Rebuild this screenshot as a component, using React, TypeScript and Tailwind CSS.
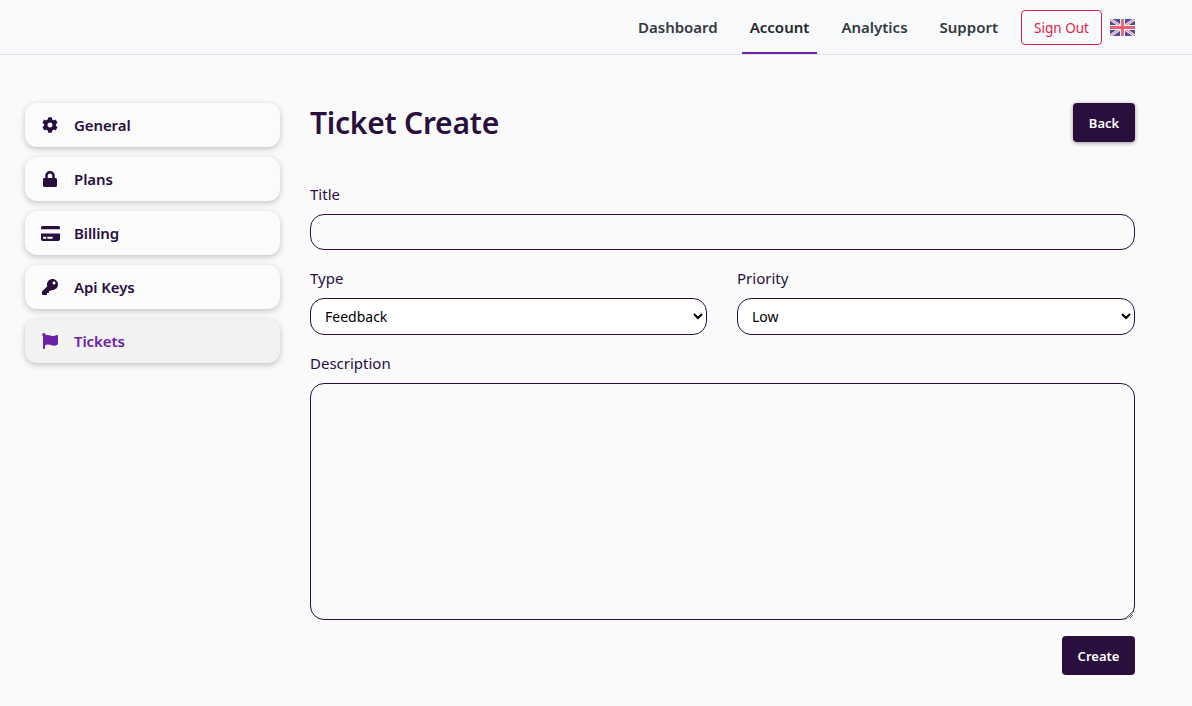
import { FaCog, FaLock, FaCreditCard, FaKey, FaFlag } from 'react-icons/fa';

const menu = [
  { label: 'General', icon: FaCog, iconClass: 'size-4' },
  { label: 'Plans', icon: FaLock, iconClass: 'size-4' },
  { label: 'Billing', icon: FaCreditCard, iconClass: 'h-[17px] w-[19px] shrink-0' },
  { label: 'Api Keys', icon: FaKey, iconClass: 'size-4' },
  { label: 'Tickets', icon: FaFlag, iconClass: 'size-4', active: true },
];

const nav = ['Dashboard', 'Account', 'Analytics', 'Support'];

function UkFlag() {
  return (
    <svg viewBox="0 0 25 17" className="h-[17px] w-[25px]">
      <rect width="25" height="17" fill="#47509a" />
      <path d="M0 0L25 17M25 0L0 17" stroke="#e9dfe6" strokeWidth="3" />
      <path d="M0 0L25 17M25 0L0 17" stroke="#e8808e" strokeWidth="1" />
      <path d="M12.5 0V17M0 8.5H25" stroke="#f4eef1" strokeWidth="5" />
      <path d="M12.5 0V17M0 8.5H25" stroke="#ec5f72" strokeWidth="2.8" />
    </svg>
  );
}

export default function App() {
  return (
    <div className="min-h-[706px] bg-[#fafafb] font-['Noto_Sans','Open_Sans',sans-serif] text-[#290f3d]">
      <header className="flex h-[55px] items-center justify-end border-b border-[#dee2e8] bg-[#f8f9fb] pr-[57px]">
        <nav className="mr-[-1px] flex h-full">
          {nav.map((item) => (
            <a
              key={item}
              className={`mr-4 flex h-[54px] items-center px-2 text-[15px] font-semibold ${
                item === 'Account'
                  ? 'border-b-2 border-[#6b21a8] pt-[2px] text-[#212529]'
                  : 'text-[#343a40]'
              }`}
            >
              {item}
            </a>
          ))}
        </nav>
        <button className="h-[35px] w-[81px] rounded border border-[#e11d48] pt-[2px] text-[13.5px] text-[#e11d48]">Sign Out</button>
        <div className="ml-2 mt-px flex items-center">
          <UkFlag />
        </div>
      </header>

      <div className="flex gap-[30px] pl-[25px] pr-[57px] pt-12">
        <aside className="flex w-[255px] flex-col gap-[10px]">
          {menu.map(({ label, icon: Icon, iconClass, active }) => (
            <a
              key={label}
              className={`flex h-11 items-center rounded-xl pl-[17px] text-[15px] font-semibold tracking-[-0.1px] shadow-[0_2px_6px_rgba(0,0,0,0.22)] ${
                active ? 'bg-[#f2f2f2] text-[#6b21a8]' : 'bg-[#fbfbfc] text-[#290f3d]'
              }`}
            >
              <span className="flex w-4 justify-center">
                <Icon className={iconClass} />
              </span>
              <span className="ml-4">{label}</span>
            </a>
          ))}
        </aside>

        <main className="flex-1">
          <div className="flex h-[39px] items-center justify-between">
            <h1 className="pt-px text-[30px] font-semibold leading-10 tracking-[-0.25px]">Ticket Create</h1>
            <button className="h-[39px] w-[62px] rounded bg-[#290f3d] pt-[2px] text-[13px] font-semibold text-white shadow-[0_1px_4px_rgba(0,0,0,0.4)]">
              Back
            </button>
          </div>

          <label className="mt-10 block text-[15px] leading-6">Title</label>
          <input className="mt-2 block h-9 w-full rounded-[14px] border border-[#290f3d] bg-transparent px-[14px] text-sm outline-none" />

          <div className="mt-4 grid grid-cols-[397px_398px] gap-[30px]">
            <div>
              <label className="block text-[15px] leading-6">Type</label>
              <select
                defaultValue="Feedback"
                className="mt-2 block h-[37px] w-full rounded-[14px] border border-[#290f3d] bg-white pl-[10px] text-sm text-black outline-none"
              >
                <option>Feedback</option>
              </select>
            </div>
            <div>
              <label className="block text-[15px] leading-6">Priority</label>
              <select
                defaultValue="Low"
                className="mt-2 block h-[37px] w-full rounded-[14px] border border-[#290f3d] bg-white pl-[10px] text-sm text-black outline-none"
              >
                <option>Low</option>
              </select>
            </div>
          </div>

          <label className="mt-4 block text-[15px] leading-6">Description</label>
          <textarea className="mt-2 block h-[237px] w-full rounded-[14px] border border-[#290f3d] bg-transparent px-[14px] py-2 text-sm outline-none" />

          <div className="mt-4 flex justify-end">
            <button className="h-[39px] w-[73px] rounded bg-[#290f3d] pt-[2px] text-[13px] font-semibold text-white">Create</button>
          </div>
        </main>
      </div>
    </div>
  );
}
